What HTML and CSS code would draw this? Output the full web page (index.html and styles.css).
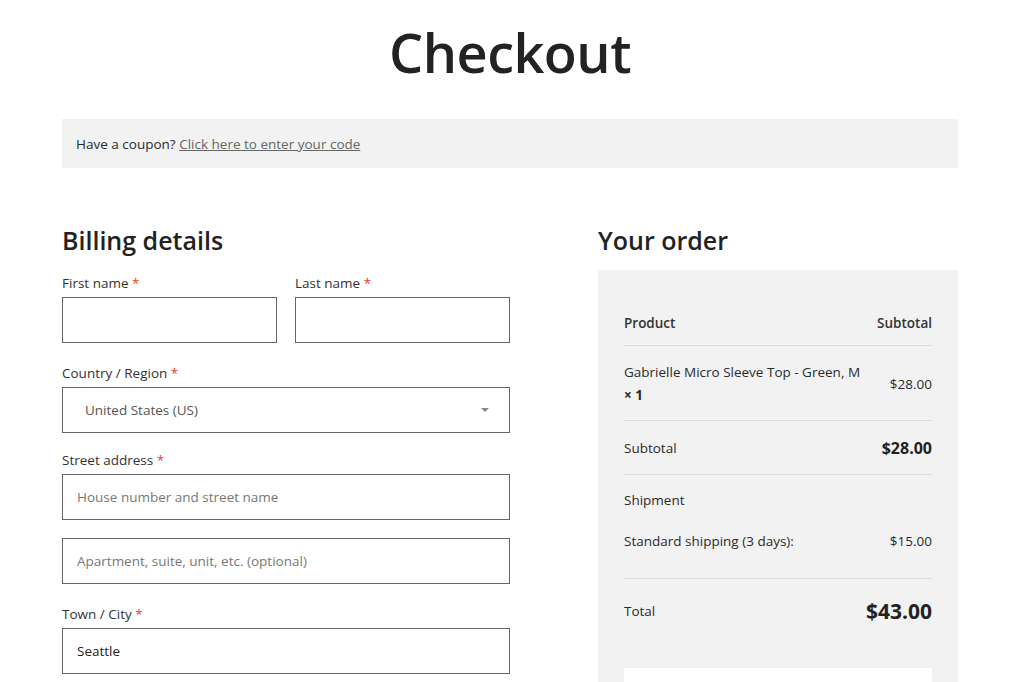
FILE: index.html
```html
<!DOCTYPE html>
<html lang="en">
<head>
    <meta charset="UTF-8">
    <meta name="viewport" content="width=device-width, initial-scale=1.0">
    <title>Checkout</title>
    <link rel="stylesheet" href="styles.css">
</head>
<body>
    <div class="page">
        <h1 class="page-title">Checkout</h1>

        <div class="coupon-bar">
            Have a coupon? <a href="#">Click here to enter your code</a>
        </div>

        <div class="checkout">
            <div class="billing">
                <h2>Billing details</h2>

                <div class="row-split">
                    <div class="field">
                        <label>First name <span class="req">*</span></label>
                        <input type="text">
                    </div>
                    <div class="field">
                        <label>Last name <span class="req">*</span></label>
                        <input type="text">
                    </div>
                </div>

                <div class="field country">
                    <label>Country / Region <span class="req">*</span></label>
                    <div class="select-box">
                        <span>United States (US)</span>
                        <span class="caret"></span>
                    </div>
                </div>

                <div class="field">
                    <label>Street address <span class="req">*</span></label>
                    <input type="text" placeholder="House number and street name">
                    <input type="text" class="second" placeholder="Apartment, suite, unit, etc. (optional)">
                </div>

                <div class="field">
                    <label>Town / City <span class="req">*</span></label>
                    <input type="text" value="Seattle">
                </div>
            </div>

            <div class="order">
                <h2>Your order</h2>
                <div class="order-box">
                    <div class="order-row head">
                        <span>Product</span>
                        <span>Subtotal</span>
                    </div>
                    <div class="order-row item">
                        <span class="item-name">Gabrielle Micro Sleeve Top - Green, M<br><strong>&times; 1</strong></span>
                        <span>$28.00</span>
                    </div>
                    <div class="order-row subtotal">
                        <span>Subtotal</span>
                        <strong>$28.00</strong>
                    </div>
                    <div class="order-row shipping">
                        <div class="ship-title">Shipment</div>
                        <div class="ship-line">
                            <span>Standard shipping (3 days):</span>
                            <span>$15.00</span>
                        </div>
                    </div>
                    <div class="order-row total">
                        <span>Total</span>
                        <strong>$43.00</strong>
                    </div>
                    <div class="payment"></div>
                </div>
            </div>
        </div>
    </div>
</body>
</html>
```

FILE: styles.css
```css
body {
    margin: 0;
    background-color: #fff;
    color: #2b2b2b;
    font-family: 'Open Sans', 'Noto Sans', sans-serif;
    font-size: 13.5px;
    overflow: hidden;
}

.page {
    width: 896px;
    margin: 0 0 0 62px;
}

.page-title {
    margin: 20px 0 0;
    text-align: center;
    font-size: 54px;
    font-weight: 600;
    line-height: 64px;
    color: #222;
    letter-spacing: -0.5px;
}

.coupon-bar {
    margin-top: 35px;
    background-color: #f2f2f2;
    height: 49px;
    line-height: 50px;
    padding: 0 14px;
    box-sizing: border-box;
    color: #2b2b2b;
}

.coupon-bar a {
    color: #666;
}

.checkout {
    display: flex;
    justify-content: space-between;
    margin-top: 54px;
}

h2 {
    margin: 0;
    font-size: 25px;
    font-weight: 600;
    line-height: 36px;
    color: #222;
}

.billing {
    width: 448px;
}

.billing h2 {
    margin-bottom: 15px;
}

.row-split {
    display: flex;
    gap: 18px;
}

.row-split .field {
    flex: 1;
}

.field {
    display: flex;
    flex-direction: column;
    margin-bottom: 20px;
}

.field.country {
    margin-bottom: 17px;
}

.field label {
    line-height: 20px;
    margin-bottom: 4px;
    color: #333;
}

.req {
    color: #e2401c;
}

input, .select-box {
    box-sizing: border-box;
    height: 46px;
    border: 1px solid #666;
    border-radius: 0;
    padding: 0 14px;
    font-family: inherit;
    font-size: 13.5px;
    color: #222;
    background: #fff;
    width: 100%;
}

input::placeholder {
    color: #777;
}

input.second {
    margin-top: 18px;
}

.select-box {
    display: flex;
    align-items: center;
    justify-content: space-between;
    padding: 0 20px 0 22px;
    color: #555;
}

.caret {
    width: 0;
    height: 0;
    border-left: 4px solid transparent;
    border-right: 4px solid transparent;
    border-top: 4px solid #888;
}

.order {
    width: 360px;
}

.order h2 {
    margin-bottom: 12px;
}

.order-box {
    background-color: #f2f2f2;
    padding: 44px 26px 0;
    height: 420px;
}

.order-row {
    display: flex;
    justify-content: space-between;
    align-items: center;
    border-bottom: 1px solid #ddd;
}

.order-row.head {
    font-weight: 600;
    padding-bottom: 13px;
    color: #333;
}

.order-row.item {
    padding: 15px 0 13px;
    line-height: 23px;
}

.item-name strong {
    font-weight: 700;
}

.order-row.subtotal {
    height: 53px;
}

.order-row.subtotal strong {
    font-size: 16px;
    font-weight: 700;
    color: #222;
}

.order-row.shipping {
    display: block;
    padding: 16px 0 0;
    height: 87px;
}

.ship-line {
    display: flex;
    justify-content: space-between;
    margin-top: 23px;
}

.order-row.total {
    border-bottom: none;
    height: 64px;
}

.order-row.total strong {
    font-size: 21px;
    font-weight: 700;
    color: #222;
}

.payment {
    margin-top: 25px;
    background: #fff;
    height: 60px;
}
```
